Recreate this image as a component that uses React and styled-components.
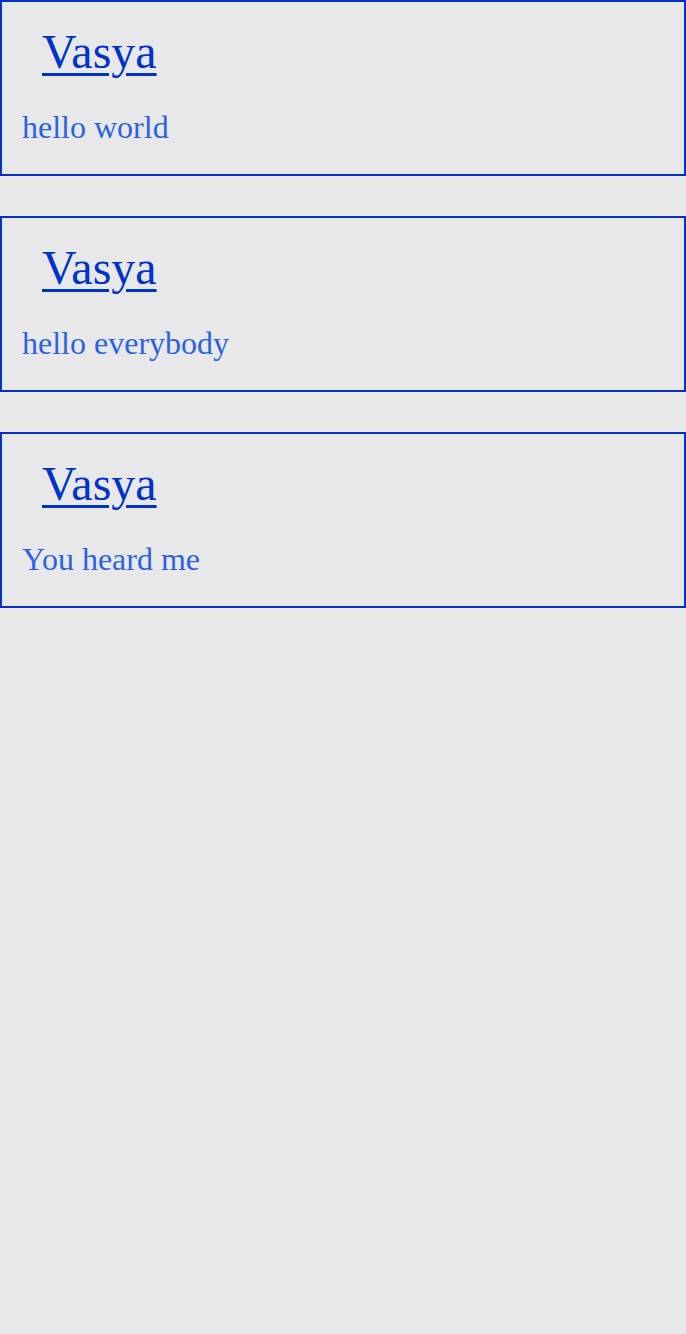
import React from "react";
import styled, { createGlobalStyle } from "styled-components";

const Global = createGlobalStyle`
  html, body {
    margin: 0;
    padding: 0;
    background: #e8e8eb;
    min-height: 100%;
  }
  body {
    font-family: "Liberation Serif", "Times New Roman", serif;
  }
  * { box-sizing: border-box; }
`;

const Feed = styled.div`
  display: flex;
  flex-direction: column;
  gap: 40px;
  min-height: 1334px;
  background: #e8e8eb;
`;

const Card = styled.article`
  border: 2px solid #0033cc;
  padding: 23.8px 20px 28px 20px;
  display: flex;
  flex-direction: column;
  gap: 31.2px;
`;

const Author = styled.a`
  display: block;
  align-self: flex-start;
  margin-left: 20px;
  font-size: 48px;
  line-height: 52px;
  color: #0033cc;
  text-decoration: underline;
  text-decoration-thickness: 3px;
  text-underline-offset: 5px;
  cursor: pointer;
`;

const Message = styled.p`
  margin: 0;
  font-size: 32px;
  line-height: 37px;
  color: #2a62e6;
`;

const posts = [
  { id: 1, author: "Vasya", text: "hello world" },
  { id: 2, author: "Vasya", text: "hello everybody" },
  { id: 3, author: "Vasya", text: "You heard me" },
];

export default function App() {
  return (
    <>
      <Global />
      <Feed>
        {posts.map((p) => (
          <Card key={p.id}>
            <Author href="#">{p.author}</Author>
            <Message>{p.text}</Message>
          </Card>
        ))}
      </Feed>
    </>
  );
}
